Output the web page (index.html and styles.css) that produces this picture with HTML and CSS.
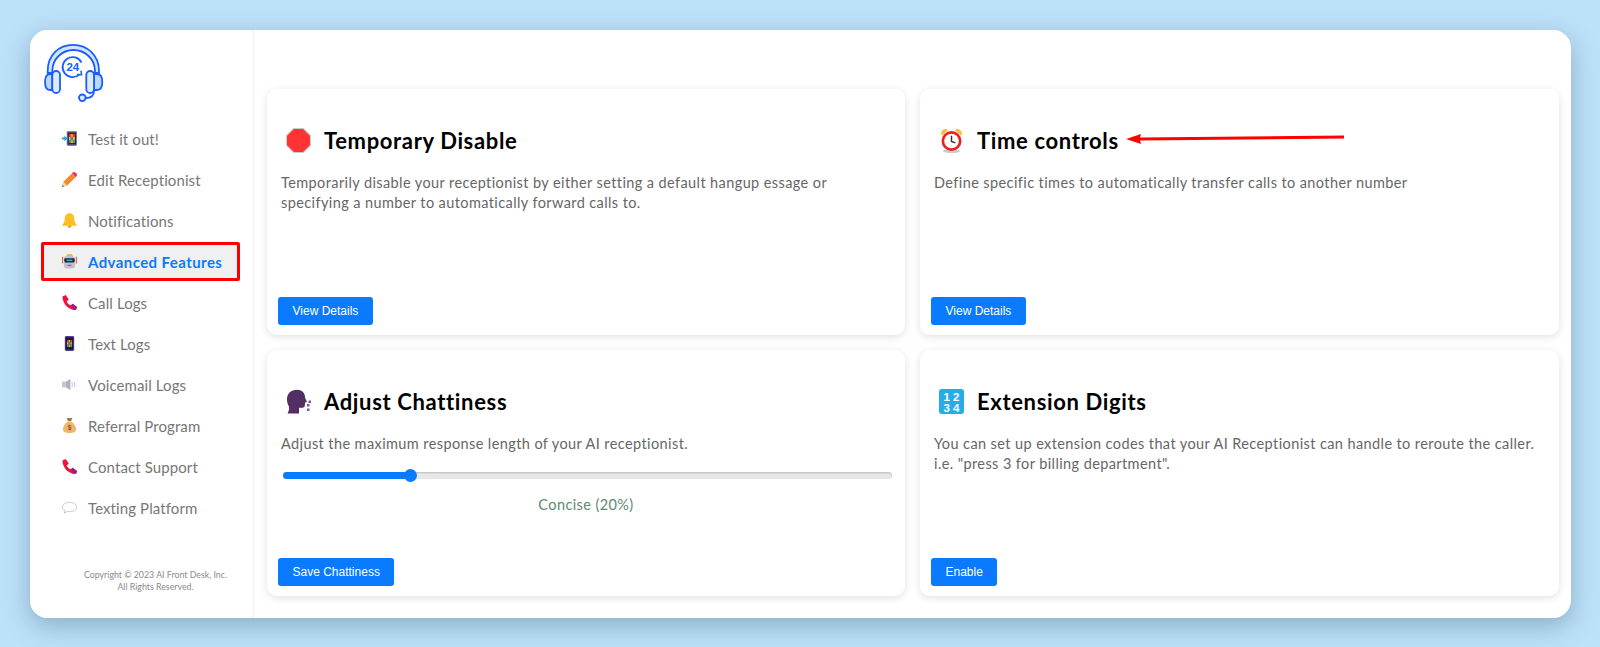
FILE: index.html
```html
<!DOCTYPE html>
<html lang="en">
<head>
<meta charset="utf-8">
<title>Advanced Features</title>
<link rel="stylesheet" href="styles.css">
</head>
<body>
<svg class="sprite" width="0" height="0" aria-hidden="true">
  <symbol id="i-phone" viewBox="0 0 16 16">
    <path d="M.5 1.500 4 0 7.200 4.800 5 6.800C6 9 7.500 10.300 9.600 11L11.300 9.200 16 12.700 15 15.800C7.500 16.500.5 9.500.5 1.500Z" fill="#f5103c"/>
    <path d="M11.300 9.200 16 12.700 15 15.800 12.700 15.900 9.600 11Z" fill="#93208f"/>
  </symbol>
  <symbol id="i-grid" viewBox="0 0 9 9" preserveAspectRatio="none">
    <rect width="3" height="3" fill="#e8362e"/><rect x="3" width="3" height="3" fill="#f5a623"/><rect x="6" width="3" height="3" fill="#e8362e"/>
    <rect y="3" width="3" height="3" fill="#f5c518"/><rect x="3" y="3" width="3" height="3" fill="#2f8fe8"/><rect x="6" y="3" width="3" height="3" fill="#f5a623"/>
    <rect y="6" width="3" height="3" fill="#2f8fe8"/><rect x="3" y="6" width="3" height="3" fill="#f5a623"/><rect x="6" y="6" width="3" height="3" fill="#3fae49"/>
  </symbol>
</svg>
<div class="app">
  <aside class="sidebar">
    <div class="logo">
      <svg width="60" height="60" viewBox="0 0 60 60" fill="none" stroke="#1a5cff" stroke-width="1.800">
        <path d="M3.700 29V27C3.700 11 15 .9 29 .9S55 11 55 27V29H51V27C51 15 41 6 29.500 6S8.300 15 8.300 27V29Z" fill="#cfe4fd"/>
        <path d="M8.300 30H6C2.500 30 1 33 1 38S2.500 46 6 46H8.300Z" fill="#b9d8fb"/>
        <rect x="8.300" y="27" width="7.700" height="22" rx="3.800" fill="#dcecff"/>
        <path d="M50 30H53C56.800 30 58.300 33 58.300 38S56.800 46 53 46H50Z" fill="#b9d8fb"/>
        <rect x="42.300" y="27" width="7.700" height="22" rx="3.800" fill="#dcecff"/>
        <path d="M50 47C50 52 47 54 41.800 54"/>
        <circle cx="38.300" cy="53.800" r="3.300" fill="#dcecff"/>
        <path d="M35.500 30.300A10 10 0 1 1 37.500 18.500"/>
        <path d="M33 30.500 37.600 30.800 37 26.600" stroke-width="1.500"/>
        <text x="28.800" y="27" class="logo-num">24</text>
      </svg>
    </div>
    <nav class="nav">
      <a class="nav-item">
        <svg class="nav-icon" viewBox="0 0 16 16"><rect x="5" y="0" width="11" height="16" rx="1.500" fill="#8d7fae"/><rect x="6" y="1.500" width="9" height="13" fill="#2a2040"/><use href="#i-grid" x="7" y="3" width="7" height="10"/><path d="M0 7h2.500V5L6 8 2.500 11V9H0Z" fill="#18a8e8"/></svg>
        <span>Test it out!</span>
      </a>
      <a class="nav-item">
        <svg class="nav-icon" viewBox="0 0 16 16"><path d="M0 16 1.500 10.500 10.500 1.500 14.500 5.500 5.500 14.500Z" fill="#f58a2c"/><path d="M0 16 1.500 10.500 5.500 14.500Z" fill="#f7d2a8"/><path d="M0 16 .6 13.800 2.200 15.400Z" fill="#666"/><path d="M11.500.5a2 2 0 0 1 2.800 0l1.200 1.200a2 2 0 0 1 0 2.800l-1 1L10.500 1.500Z" fill="#f0386b"/></svg>
        <span>Edit Receptionist</span>
      </a>
      <a class="nav-item">
        <svg class="nav-icon" viewBox="0 0 16 16"><path d="M8 .3C11.300.3 13 2.800 13.100 6c.1 3 .9 5 2.400 6.300v1.200H.5v-1.200C2 11 2.800 9 2.900 6 3 2.800 4.700.3 8 .3Z" fill="#fbbf24"/><path d="M5.800 13.500h4.400a2.200 2.200 0 0 1-4.400 0Z" fill="#e89a12"/></svg>
        <span>Notifications</span>
      </a>
      <a class="nav-item nav-item-active">
        <svg class="nav-icon" viewBox="0 0 16 16"><path d="M4.500 2.500 5.500.3h5l1 2.200Z" fill="#f0b429"/><rect x="2" y="2" width="12" height="13.500" rx="3.500" fill="#c4bec9"/><rect x="2.500" y="4.500" width="11" height="4.500" rx="1.200" fill="#1f2a38"/><rect x="5" y="6" width="6" height="1.500" fill="#29b6f6"/><path d="M0 3h1.200v7H0ZM14.800 3H16v7h-1.200Z" fill="#ef5a4a"/><rect x="6" y="11.500" width="4" height="1.200" fill="#77707c"/></svg>
        <span>Advanced Features</span>
      </a>
      <a class="nav-item">
        <svg class="nav-icon" viewBox="0 0 16 16"><use href="#i-phone"/></svg>
        <span>Call Logs</span>
      </a>
      <a class="nav-item">
        <svg class="nav-icon" viewBox="0 0 16 16"><rect x="3" y="0" width="10" height="16" rx="1.500" fill="#5a3a96"/><rect x="4" y="1.500" width="8" height="13" fill="#14182c"/><use href="#i-grid" x="5" y="4" width="6" height="8"/></svg>
        <span>Text Logs</span>
      </a>
      <a class="nav-item">
        <svg class="nav-icon" viewBox="0 0 16 16"><path d="M0 5h4v6H0Z" fill="#c9c3d2"/><path d="M4 5 9 2v12L4 11Z" fill="#b5aec2"/><path d="M10.500 6a3 3 0 0 1 0 4M12.500 4.800a5 5 0 0 1 0 6.400" fill="none" stroke="#9fc4ea" stroke-width="1"/></svg>
        <span>Voicemail Logs</span>
      </a>
      <a class="nav-item">
        <svg class="nav-icon" viewBox="0 0 16 16"><path d="M5 0h6L9.800 3.500H6.200Z" fill="#a9763d"/><path d="M6 4h4c3 2 5 5 5 8 0 3-3 4-7 4s-7-1-7-4c0-3 2-6 5-8Z" fill="#f0b46c"/><text x="8" y="13" class="bag-sign">$</text></svg>
        <span>Referral Program</span>
      </a>
      <a class="nav-item">
        <svg class="nav-icon" viewBox="0 0 16 16"><use href="#i-phone"/></svg>
        <span>Contact Support</span>
      </a>
      <a class="nav-item">
        <svg class="nav-icon" viewBox="0 0 16 16"><path d="M8 2.500c4 0 7.500 2 7.500 5s-3.500 5-7.500 5c-.9 0-1.700-.1-2.500-.3L2.500 14l.6-3C1.400 10.100.5 8.900.5 7.500c0-3 3.500-5 7.500-5Z" fill="#fff" stroke="#b8b8b8" stroke-width=".8"/></svg>
        <span>Texting Platform</span>
      </a>
    </nav>
    <footer class="copyright">Copyright © 2023 AI Front Desk, Inc.<br>All Rights Reserved.</footer>
  </aside>
  <main class="main">
    <section class="card">
      <header class="card-head">
        <svg class="card-icon" viewBox="0 0 24 24"><path d="M7.300.5h9.400l6.800 6.800v9.400l-6.800 6.800H7.300L.5 16.700V7.300Z" fill="#f33" stroke="#ccc" stroke-width="1"/></svg>
        <h2>Temporary Disable</h2>
      </header>
      <p class="card-text">Temporarily disable your receptionist by either setting a default hangup essage or specifying a number to automatically forward calls to.</p>
      <button class="btn" type="button">View Details</button>
    </section>
    <section class="card">
      <header class="card-head">
        <svg class="card-icon" viewBox="0 0 24 26"><path d="M2 8a4.500 4.500 0 0 1 6.500-6ZM22 8a4.500 4.500 0 0 0-6.500-6Z" fill="#f5bf3f"/><ellipse cx="12" cy="24" rx="9" ry="2" fill="#ccc"/><circle cx="12" cy="13.500" r="9" fill="#fff" stroke="#f01e1e" stroke-width="2.800"/><path d="M12 8V14L16 15.500" fill="none" stroke="#333" stroke-width="1.500"/></svg>
        <h2>Time controls</h2>
      </header>
      <p class="card-text">Define specific times to automatically transfer calls to another number</p>
      <button class="btn" type="button">View Details</button>
    </section>
    <section class="card">
      <header class="card-head">
        <svg class="card-icon" viewBox="0 0 25 24"><path d="M11 .3c5 0 8 3.500 8 7 0 1 .3 1.700 1 3l1 2.200-2 .5c0 2.500 0 4.500-1.500 5-1.300.4-3 .2-4.500.2V24H1.500C3 21 3.500 19 2.800 16.700 1.600 14.500 1 12.500 1 10 1 4 5 .3 11 .3Z" fill="#532d63"/><path d="M21 14.500h2.500V17H21ZM22.500 11H25v2.500h-2.500ZM21 19h2.500v2.500H21Z" fill="#7f5a92"/></svg>
        <h2>Adjust Chattiness</h2>
      </header>
      <p class="card-text">Adjust the maximum response length of your AI receptionist.</p>
      <div class="slider">
        <div class="slider-track">
          <div class="slider-fill" style="width:20.800%"></div>
          <div class="slider-thumb" style="left:20.800%"></div>
        </div>
      </div>
      <p class="slider-label">Concise (20%)</p>
      <button class="btn" type="button">Save Chattiness</button>
    </section>
    <section class="card">
      <header class="card-head">
        <svg class="card-icon" viewBox="0 0 26 26"><rect width="26" height="26" rx="3" fill="#29abe8"/><text x="8" y="12.500" class="digit">1</text><text x="18" y="12.500" class="digit">2</text><text x="8" y="23.500" class="digit">3</text><text x="18" y="23.500" class="digit">4</text></svg>
        <h2>Extension Digits</h2>
      </header>
      <p class="card-text">You can set up extension codes that your AI Receptionist can handle to reroute the caller. i.e. "press 3 for billing department".</p>
      <button class="btn" type="button">Enable</button>
    </section>
    <svg class="arrow" width="220" height="14" viewBox="0 0 220 14"><path d="M0 8 15 3 14 6.500 218 4.400 218 7.400 14 9.500 15 13Z" fill="#f00"/></svg>
  </main>
</div>
</body>
</html>
```

FILE: styles.css
```css
* { box-sizing: border-box; }

html, body { margin: 0; height: 100%; }

body {
  padding: 30px 29px 0 30px;
  background: #bde1f8;
  font-family: "Lato", "Noto Sans", sans-serif;
  overflow: hidden;
}

.sprite { position: absolute; }

.app {
  display: flex;
  height: 588px;
  background: #fff;
  border-radius: 18px;
  overflow: hidden;
  box-shadow: 0 8px 26px rgba(40, 80, 110, 0.35);
}

.sidebar {
  width: 222px;
  flex: none;
  display: flex;
  flex-direction: column;
  padding: 14px 12px 0 11px;
  background: #fff;
}

.logo { height: 60px; margin-left: 3px; }
.logo svg { display: block; }

.logo-num {
  font: 700 11.500px "Liberation Sans", sans-serif;
  fill: #1a5cff;
  stroke: none;
  text-anchor: middle;
}

.bag-sign {
  font: 700 7px "Liberation Sans", sans-serif;
  fill: #8a5a22;
  text-anchor: middle;
}

.digit {
  font: 700 12px "Liberation Sans", sans-serif;
  fill: #fff;
  text-anchor: middle;
}

.nav {
  margin-top: 15px;
  display: flex;
  flex-direction: column;
  gap: 2px;
}

.nav-item {
  display: flex;
  align-items: center;
  gap: 11px;
  height: 39px;
  padding-left: 21px;
  font-size: 15px;
  letter-spacing: 0.1px;
  color: #777;
}

.nav-icon { width: 15px; height: 15px; flex: none; }

.nav-item-active {
  background: #f0f0f0;
  border: 3px solid #f00;
  border-radius: 2px;
  padding-left: 18px;
  color: #0a7aff;
  font-weight: 700;
  letter-spacing: 0.42px;
}

.copyright {
  margin-top: 42px;
  padding-left: 30px;
  font-size: 8.800px;
  line-height: 11.500px;
  text-align: center;
  color: #8a8a8a;
}

.main {
  flex: 1;
  display: grid;
  grid-template-columns: 638px 1fr;
  grid-template-rows: 246px 246px;
  column-gap: 15px;
  row-gap: 15px;
  padding: 59px 12px 0 12px;
  border-left: 3px solid #f8f8f8;
  position: relative;
}

.card {
  display: flex;
  flex-direction: column;
  padding: 37px 10px 10px;
  background: #fff;
  border-radius: 10px;
  box-shadow: 0 2px 8px rgba(0, 0, 0, 0.12);
}

.card-head {
  display: flex;
  align-items: center;
  gap: 13px;
  height: 28px;
  padding-left: 9px;
}

.card-icon { width: 25px; height: 25px; flex: none; }

.card-head h2 {
  margin: 0;
  font-size: 22px;
  font-weight: 700;
  letter-spacing: 0.65px;
  color: #000;
}

.card-text {
  margin: 19px 0 0;
  padding: 0 4px;
  font-size: 14.500px;
  line-height: 20px;
  letter-spacing: 0.4px;
  color: #666;
}

.slider { padding: 0 3px 0 6px; margin-top: 18px; }

.slider-track {
  position: relative;
  height: 7px;
  border-radius: 4px;
  background: #e8e8e8;
  box-shadow: inset 0 1px 2px rgba(0, 0, 0, 0.2);
}

.slider-fill {
  height: 100%;
  border-radius: 4px;
  background: #0a7aff;
}

.slider-thumb {
  position: absolute;
  top: -3px;
  width: 13px;
  height: 13px;
  margin-left: -6px;
  border-radius: 50%;
  background: #0a7aff;
}

.slider-label {
  margin: 17px 0 0;
  text-align: center;
  font-size: 14.500px;
  letter-spacing: 0.4px;
  color: #5d8a6d;
}

.btn {
  margin: auto 0 0 1px;
  align-self: flex-start;
  height: 28px;
  padding: 0 14.500px;
  border: 0;
  border-radius: 3px;
  background: #0a7aff;
  color: #fff;
  font: 12px "Liberation Sans", sans-serif;
}

.arrow {
  position: absolute;
  left: 871px;
  top: 101px;
}
```
